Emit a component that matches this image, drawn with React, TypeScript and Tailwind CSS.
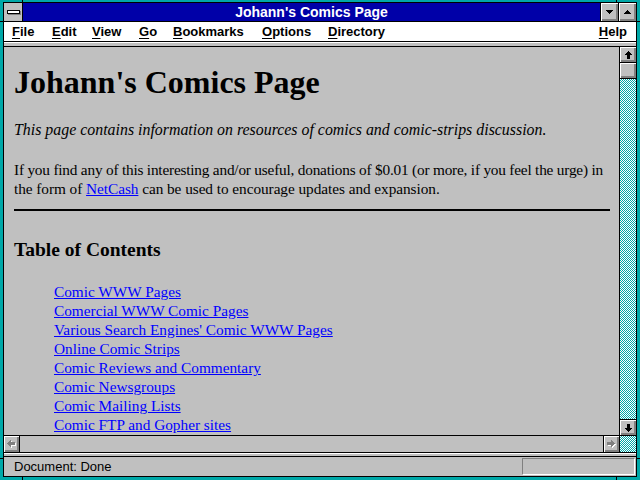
import React from "react";

const UpArrow = ({ color = "#000" }: { color?: string }) => (
  <svg width="7" height="8" viewBox="0 0 7 8" shapeRendering="crispEdges">
    <path d="M3 0h1v1h-1z M2 1h3v1h-3z M1 2h5v1h-5z M0 3h7v1h-7z M2 4h3v4h-3z" fill={color} />
  </svg>
);
const DownArrow = ({ color = "#000" }: { color?: string }) => (
  <svg width="7" height="8" viewBox="0 0 7 8" shapeRendering="crispEdges">
    <path d="M2 0h3v4h-3z M0 4h7v1h-7z M1 5h5v1h-5z M2 6h3v1h-3z M3 7h1v1h-1z" fill={color} />
  </svg>
);
const LeftArrowDisabled = () => (
  <svg width="9" height="8" viewBox="0 0 9 8" shapeRendering="crispEdges">
    <g transform="translate(1,1)" fill="#fff">
      <path d="M0 3h1v1h-1z M1 2h1v3h-1z M2 1h1v5h-1z M3 0h1v7h-1z M4 2h4v3h-4z" />
    </g>
    <path d="M0 3h1v1h-1z M1 2h1v3h-1z M2 1h1v5h-1z M3 0h1v7h-1z M4 2h4v3h-4z" fill="#808080" />
  </svg>
);
const RightArrowDisabled = () => (
  <svg width="9" height="8" viewBox="0 0 9 8" shapeRendering="crispEdges">
    <g transform="translate(1,1)" fill="#fff">
      <path d="M7 3h1v1h-1z M6 2h1v3h-1z M5 1h1v5h-1z M4 0h1v7h-1z M0 2h4v3h-4z" />
    </g>
    <path d="M7 3h1v1h-1z M6 2h1v3h-1z M5 1h1v5h-1z M4 0h1v7h-1z M0 2h4v3h-4z" fill="#808080" />
  </svg>
);
const TriDown = () => (
  <svg width="7" height="4" viewBox="0 0 7 4" shapeRendering="crispEdges">
    <path d="M0 0h7v1h-7z M1 1h5v1h-5z M2 2h3v1h-3z M3 3h1v1h-1z" fill="#000" />
  </svg>
);
const TriUp = () => (
  <svg width="7" height="4" viewBox="0 0 7 4" shapeRendering="crispEdges">
    <path d="M3 0h1v1h-1z M2 1h3v1h-3z M1 2h5v1h-5z M0 3h7v1h-7z" fill="#000" />
  </svg>
);

const Dither = ({ id }: { id: string }) => (
  <svg className="block w-full h-full" shapeRendering="crispEdges">
    <defs>
      <pattern id={id} width="2" height="2" patternUnits="userSpaceOnUse">
        <rect width="2" height="2" fill="#00a8a8" />
        <rect width="1" height="1" fill="#ffffff" />
        <rect x="1" y="1" width="1" height="1" fill="#ffffff" />
      </pattern>
    </defs>
    <rect width="100%" height="100%" fill={`url(#${id})`} />
  </svg>
);

const bevel = "bg-[#c0c0c0] shadow-[inset_1px_1px_0_#ffffff,inset_-1px_-1px_0_#808080,inset_-2px_-2px_0_#808080]";

const menus: { label: string; w: string }[] = [
  { label: "File", w: "w-[40px]" },
  { label: "Edit", w: "w-[40px]" },
  { label: "View", w: "w-[47px]" },
  { label: "Go", w: "w-[34px]" },
  { label: "Bookmarks", w: "w-[89px]" },
  { label: "Options", w: "w-[66px]" },
  { label: "Directory", w: "w-[100px]" },
];

const links = [
  "Comic WWW Pages",
  "Comercial WWW Comic Pages",
  "Various Search Engines' Comic WWW Pages",
  "Online Comic Strips",
  "Comic Reviews and Commentary",
  "Comic Newsgroups",
  "Comic Mailing Lists",
  "Comic FTP and Gopher sites",
];

export default function App() {
  return (
    <div className="relative w-[640px] h-[480px] bg-[#00a8a8] pt-[2px] pl-[3px] pr-[3px] pb-[3px] font-['Liberation_Sans',Arial,sans-serif] overflow-hidden">
      {/* frame corner marks */}
      <div className="absolute left-[22px] top-0 w-[1px] h-[3px] bg-black" />
      <div className="absolute left-[616px] top-0 w-[1px] h-[3px] bg-black" />
      <div className="absolute left-[22px] bottom-0 w-[1px] h-[3px] bg-black" />
      <div className="absolute left-[616px] bottom-0 w-[1px] h-[3px] bg-black" />
      <div className="absolute left-0 top-[21px] w-[3px] h-[1px] bg-black" />
      <div className="absolute right-0 top-[21px] w-[3px] h-[1px] bg-black" />
      <div className="absolute left-0 bottom-[21px] w-[3px] h-[1px] bg-black" />
      <div className="absolute right-0 bottom-[21px] w-[3px] h-[1px] bg-black" />

      <div className="w-full h-full border border-black flex flex-col">
        {/* Title bar */}
        <div className="h-[19px] flex border-b border-black shrink-0">
          <div className="w-[19px] h-[18px] bg-[#c0c0c0] border-r border-black flex items-center justify-center">
            <div className="w-[13px] h-[4px] border border-black bg-white shadow-[1px_1px_0_#808080] mb-[1px]" />
          </div>
          <div className="flex-1 bg-[#0000a8] flex items-center justify-center text-white font-bold text-[14px] leading-[16px]">
            Johann's Comics Page
          </div>
          <div className={`w-[18px] h-[18px] border-l border-black flex items-center justify-center ${bevel}`}>
            <TriDown />
          </div>
          <div className={`w-[18px] h-[18px] border-l border-black flex items-center justify-center ${bevel}`}>
            <TriUp />
          </div>
        </div>

        {/* Menu bar */}
        <div className="h-[20px] bg-white border-b border-black flex items-center pl-[8px] pr-[9px] text-[13px] font-bold text-black shrink-0">
          {menus.map((m) => (
            <div key={m.label} className={`${m.w} leading-[15px]`}>
              <span className="underline underline-offset-[2px]">{m.label[0]}</span>
              {m.label.slice(1)}
            </div>
          ))}
          <div className="ml-auto leading-[15px]">
            <span className="underline underline-offset-[2px]">H</span>elp
          </div>
        </div>

        {/* strip */}
        <div className="h-[5px] bg-[#c0c0c0] border-t border-t-white border-b border-b-black shrink-0" />

        {/* Main */}
        <div className="h-[388px] flex shrink-0">
          <div className="w-[615px] h-full overflow-hidden bg-[#c0c0c0] pl-[10px] pr-[9px] text-black font-['Liberation_Serif','Times_New_Roman',serif]">
            <h1 className="mt-[19px] text-[32px] leading-[32px] font-bold whitespace-nowrap">Johann's Comics Page</h1>
            <p className="mt-[22px] text-[15.9px] leading-[19px] italic whitespace-nowrap">
              This page contains information on resources of comics and comic-strips discussion.
            </p>
            <p className="mt-[21px] text-[15.3px] leading-[19px] whitespace-nowrap">
              <span className="tracking-[-0.2px]">
                If you find any of this interesting and/or useful, donations of $0.01 (or more, if you feel the urge) in
              </span>
              <br />
              <span className="tracking-[-0.05px]">
                the form of <a className="text-[#0000ff] underline">NetCash</a> can be used to encourage updates and expansion.
              </span>
            </p>
            <div className="mt-[11px] h-[2px] bg-black" />
            <h2 className="mt-[28px] text-[19.5px] leading-[22px] font-bold whitespace-nowrap">Table of Contents</h2>
            <ul className="mt-[21px] pl-[40px] text-[15.3px] leading-[19px] whitespace-nowrap">
              {links.map((l) => (
                <li key={l}>
                  <a className="text-[#0000ff] underline">{l}</a>
                </li>
              ))}
            </ul>
          </div>
          <div className="w-[17px] h-full border-l border-black flex flex-col">
            <div className="h-[16px] border-b border-black shrink-0">
              <div className={`h-[15px] flex items-center justify-center ${bevel}`}>
                <UpArrow />
              </div>
            </div>
            <div className="h-[16px] border-b border-black shrink-0">
              <div className={`h-[15px] ${bevel}`} />
            </div>
            <div className="flex-1 min-h-0">
              <Dither id="vdither" />
            </div>
            <div className="h-[16px] border-t border-black shrink-0">
              <div className={`h-[15px] flex items-center justify-center ${bevel}`}>
                <DownArrow />
              </div>
            </div>
          </div>
        </div>

        {/* Horizontal scrollbar */}
        <div className="h-[18px] border-t border-b border-black flex shrink-0">
          <div className="w-[16px] h-[16px] border-r border-black">
            <div className={`w-[15px] h-[16px] flex items-center justify-center ${bevel}`}>
              <LeftArrowDisabled />
            </div>
          </div>
          <div className="flex-1 bg-[#c0c0c0]" />
          <div className="w-[16px] h-[16px] border-l border-black">
            <div className={`w-[15px] h-[16px] flex items-center justify-center ${bevel}`}>
              <RightArrowDisabled />
            </div>
          </div>
          <div className="w-[17px] h-[16px] border-l border-black">
            <Dither id="cdither" />
          </div>
        </div>

        {/* strip */}
        <div className="h-[4px] bg-[#c0c0c0] border-t border-t-white border-b border-b-black shrink-0" />

        {/* Status bar */}
        <div className="h-[19px] bg-[#c0c0c0] flex items-center pl-[10px] pr-[1px] shrink-0">
          <span className="text-[13px] leading-[15px] text-black">Document: Done</span>
          <div className="ml-auto w-[113px] h-[17px] border border-t-[#808080] border-l-[#808080] border-b-white border-r-white" />
        </div>
      </div>
    </div>
  );
}
